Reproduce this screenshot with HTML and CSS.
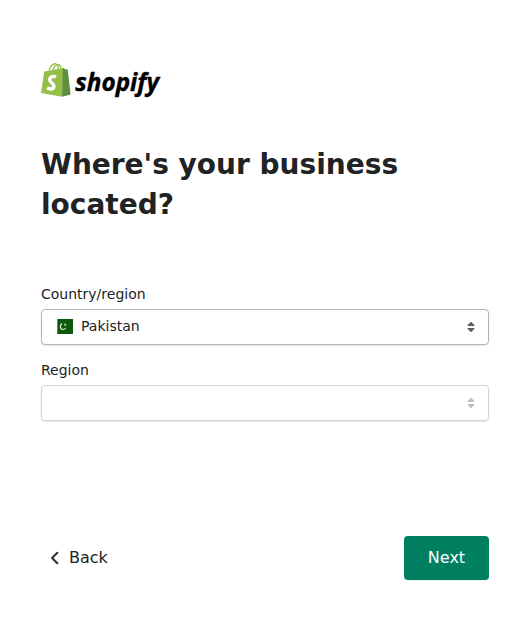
FILE: index.html
```html
<!DOCTYPE html>
<html lang="en">
<head>
<meta charset="utf-8">
<title>Shopify</title>
<link rel="stylesheet" href="styles.css">
</head>
<body>
<main class="page">
  <svg class="logo" width="124" height="40" viewBox="0 0 124 40" role="img" aria-label="Shopify">
    <path d="M8.2 8.5C8.6 5.3 11 2.2 13.4 1.7 15.7 1.3 17.3 3.5 17.5 7.5M12 8.3C12.8 4.8 14.7 2.5 17 2.6 18.8 2.7 19.8 4.3 20 6.7" fill="none" stroke="#95bf47" stroke-width="1.4"/>
    <path d="M3.2 9.6 22.9 5.9 21.2 34.7 0 30.9Z" fill="#95bf47"/>
    <path d="M21.8 5.7 24.2 7.3 26.7 7.6 29.6 32.5 21 34.7Z" fill="#5e8e3e"/>
    <path d="M15 14.9C12.7 13.8 8.9 14.5 8.7 17.6 8.5 20.6 13.1 21.3 12.9 24.3 12.7 27.6 8.6 27.6 6.3 25.6" fill="none" stroke="#fff" stroke-width="3.5"/>
    <text class="wordmark" x="34.3" y="28.5" textLength="83.7" lengthAdjust="spacingAndGlyphs">shopify</text>
  </svg>
  <h1 class="title">Where's your business located?</h1>
  <form class="form">
    <div class="label">Country/region</div>
    <div class="select">
      <svg class="flag" width="16" height="16" viewBox="0 0 16 16">
        <path fill="#0c590b" d="M0 0h16v15H0z"/>
        <path fill="#fff" fill-opacity=".3" d="M0 0h1v15H0z"/>
        <path d="M5 4.5C2.2 6.2 3.2 10.6 6.1 10.5 7.3 10.5 8.2 9.8 8.6 9" fill="none" stroke="#e3eee3" stroke-width="1.2"/>
        <path fill="#e3eee3" d="m7.2 4.5 1 .6 1-.5-.3 1 .6.8H8.4l-.8.7-.1-1z"/>
      </svg>
      <span class="value">Pakistan</span>
      <svg class="arrows" width="8" height="12" viewBox="0 0 8 12"><path d="M1 5h6c.5 0 .6-.5.3-.9L4.6 1.3a.8.8 0 0 0-1.2 0L.7 4.1C.4 4.5.5 5 1 5Zm0 2h6c.5 0 .6.5.3.9l-2.7 2.8a.8.8 0 0 1-1.2 0L.7 7.9C.4 7.5.5 7 1 7Z"/></svg>
    </div>
    <div class="label">Region</div>
    <div class="select disabled">
      <svg class="arrows" width="8" height="12" viewBox="0 0 8 12"><path d="M1 5h6c.5 0 .6-.5.3-.9L4.6 1.3a.8.8 0 0 0-1.2 0L.7 4.1C.4 4.5.5 5 1 5Zm0 2h6c.5 0 .6.5.3.9l-2.7 2.8a.8.8 0 0 1-1.2 0L.7 7.9C.4 7.5.5 7 1 7Z"/></svg>
    </div>
  </form>
  <footer class="actions">
    <button class="back" type="button"><svg width="8" height="14" viewBox="0 0 8 14"><path d="M6.3 1.8 1.1 7l5.2 5.2" fill="none" stroke="#303030" stroke-width="2" stroke-linecap="round" stroke-linejoin="round"/></svg>Back</button>
    <button class="next" type="button">Next</button>
  </footer>
</main>
</body>
</html>
```

FILE: styles.css
```css
* { box-sizing: border-box; }
body {
  margin: 0;
  background: #fff;
  color: #202223;
  font-family: "DejaVu Sans", sans-serif;
}
.page {
  width: 531px;
  height: 621px;
  padding: 62px 42px 41px 41px;
  display: flex;
  flex-direction: column;
}
.logo { display: block; flex: none; overflow: visible; }
.wordmark {
  font: italic 700 25.5px "Open Sans", sans-serif;
  fill: #000;
  stroke: #000;
  stroke-width: .4px;
}
.title {
  margin: 43px 0 59px;
  font-size: 28px;
  line-height: 40px;
  font-weight: 700;
}
.label {
  font-size: 14px;
  line-height: 20px;
  margin-bottom: 5px;
}
.select {
  display: flex;
  align-items: center;
  height: 36px;
  margin-bottom: 15px;
  padding: 0 13px 0 15px;
  border: 1px solid #aeb4bb;
  border-radius: 4px;
  box-shadow: 0 1px 2px rgba(0, 0, 0, .1);
  font-size: 14px;
}
.value { margin-left: 8px; position: relative; top: -1px; }
.arrows { margin-left: auto; fill: #5c5f62; }
.disabled { border-color: #d2d5d8; }
.disabled .arrows { fill: #babec3; }
.actions {
  display: flex;
  align-items: center;
  justify-content: space-between;
  margin-top: auto;
}
.back, .next {
  border: 0;
  font: 16px/20px "DejaVu Sans", sans-serif;
}
.back {
  display: flex;
  align-items: center;
  gap: 10px;
  padding: 0 0 0 10px;
  background: none;
  color: #202223;
}
.next {
  width: 85px;
  height: 44px;
  padding: 0;
  border-radius: 4px;
  background: #008060;
  color: #fff;
  box-shadow: 0 1px 1px rgba(0, 0, 0, .06);
}
```
